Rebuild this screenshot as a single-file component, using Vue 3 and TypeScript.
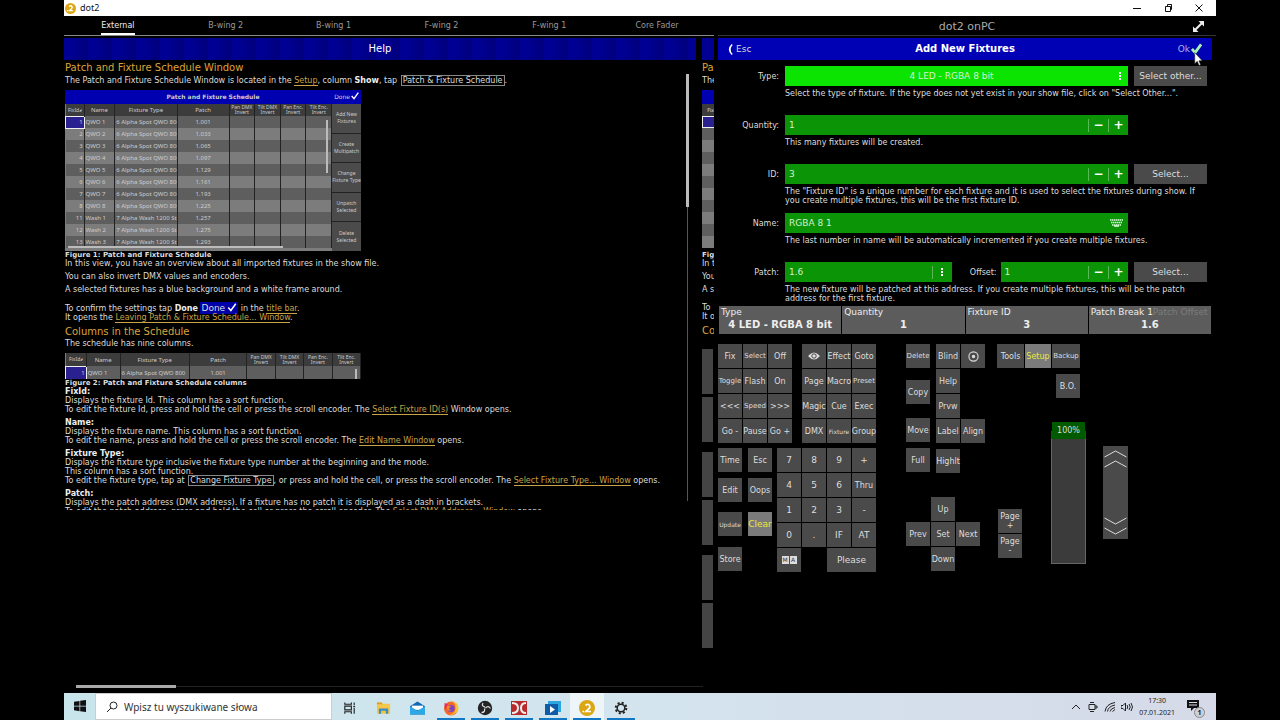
<script setup lang="ts">
import { ref } from 'vue'

interface Key {
  label: string
  size?: string
  lit?: boolean
  icon?: string
  wide?: boolean
}

const tabs = ['External', 'B-wing 2', 'B-wing 1', 'F-wing 2', 'F-wing 1', 'Core Fader']

const patches = ['1.001', '1.033', '1.065', '1.097', '1.129', '1.161', '1.193', '1.225', '1.257', '1.275', '1.293']
const fixtures = patches.map((patch, i) => {
  const wash = i > 7
  return {
    id: wash ? i + 3 : i + 1,
    name: wash ? `Wash ${i - 7}` : `QWO ${i + 1}`,
    type: wash ? '7 Alpha Wash 1200 St' : '6 Alpha Spot QWO 800',
    patch,
  }
})
const figures = [fixtures, fixtures.slice(0, 1)]
const sideActions = ['Add New Fixtures', 'Create Multipatch', 'Change Fixture Type', 'Unpatch Selected', 'Delete Selected']

const fixtureType = ref('4 LED - RGBA 8 bit')
const quantity = ref('1')
const fixtureId = ref('3')
const fixtureName = ref('RGBA 8 1')
const patchAddress = ref('1.6')
const offset = ref('1')

const encoders = [
  { title: 'Type', value: '4 LED - RGBA 8 bit', extra: '' },
  { title: 'Quantity', value: '1', extra: '' },
  { title: 'Fixture ID', value: '3', extra: '' },
  { title: 'Patch Break 1', value: '1.6', extra: 'Patch Offset' },
]

const playback: Key[] = [
  { label: 'Fix' }, { label: 'Select', size: 's' }, { label: 'Off' },
  { label: 'Toggle', size: 's' }, { label: 'Flash' }, { label: 'On' },
  { label: '<<<' }, { label: 'Speed', size: 's' }, { label: '>>>' },
  { label: 'Go -' }, { label: 'Pause' }, { label: 'Go +' },
]
const objects: Key[] = [
  { label: 'View', icon: 'eye' }, { label: 'Effect' }, { label: 'Goto' },
  { label: 'Page' }, { label: 'Macro' }, { label: 'Preset', size: 's' },
  { label: 'Magic' }, { label: 'Cue' }, { label: 'Exec' },
  { label: 'DMX' }, { label: 'Fixture', size: 'xs' }, { label: 'Group' },
]
const editing: Key[] = [
  { label: 'Time' }, { label: 'Esc' }, { label: 'Edit' }, { label: 'Oops' },
  { label: 'Update', size: 'xs' }, { label: 'Clear', size: 'l', lit: true }, { label: 'Store' },
]
const numeric: Key[] = [
  ...['7', '8', '9', '+', '4', '5', '6'].map((label) => ({ label, size: 'l' })),
  { label: 'Thru' },
  ...['1', '2', '3', '-', '0', '.', 'IF', 'AT'].map((label) => ({ label, size: 'l' })),
  { label: 'MA', icon: 'ma' }, { label: 'Please', size: 'l', wide: true },
]
const commands: Key[] = [{ label: 'Delete', size: 's' }, { label: 'Copy' }, { label: 'Move' }, { label: 'Full' }]
const tools: Key[] = [
  { label: 'Blind' }, { label: 'Solo', icon: 'target' }, { label: 'Help' }, { label: 'Prvw' },
  { label: 'Label' }, { label: 'Align' }, { label: 'Highlt' },
]
const setup: Key[] = [{ label: 'Tools' }, { label: 'Setup', lit: true }, { label: 'Backup', size: 's' }]
const cursorKeys = ['Up', 'Prev', 'Set', 'Next', 'Down']
</script>

<template>
  <div class="desktop">
    <header class="titlebar">
      <svg class="logo" viewBox="0 0 24 24"><circle cx="12" cy="12" r="12" fill="#dba714" /><path d="M9 7.500q4-3 6 0t-1 5l-4 4h7M4 16.500h3" fill="none" stroke="#fff" stroke-width="3" /></svg>
      <span>dot2</span>
      <nav class="window-controls">
        <button aria-label="Minimize"><svg viewBox="0 0 10 10"><path d="M1 5.500h8" /></svg></button>
        <button aria-label="Restore"><svg viewBox="0 0 10 10"><path d="M2.500 3.500h5v5h-5zM4.500 3.500v-2h4v5h-1" /></svg></button>
        <button aria-label="Close"><svg viewBox="0 0 10 10"><path d="M1.500 1.500l7 7M8.500 1.500l-7 7" /></svg></button>
      </nav>
    </header>

    <main class="screens">
      <section class="left">
        <nav class="tabs">
          <button v-for="(tab, i) in tabs" :key="tab" :class="{ active: i === 0 }"><span>{{ tab }}</span></button>
        </nav>
        <div class="carousel">
          <div class="page">
            <h1 class="help-title">Help</h1>
            <div class="help-body">
              <article class="help">
                <h2>Patch and Fixture Schedule Window</h2>
                <p class="lead">The Patch and Fixture Schedule Window is located in the <a href="#">Setup</a>, column <b>Show</b>, tap <span class="chip">Patch &amp; Fixture Schedule</span>.</p>
                <template v-for="(rows, f) in figures" :key="f">
                  <template v-if="f === 1">
                    <p>In this view, you have an overview about all imported fixtures in the show file.</p>
                    <p>You can also invert DMX values and encoders.</p>
                    <p>A selected fixtures has a blue background and a white frame around.</p>
                    <p class="confirm">To confirm the settings tap <b>Done</b> <span class="done-chip">Done<svg viewBox="0 0 12 12"><path d="M1 6l3.500 4L11 1" /></svg></span> in the <a href="#">title bar</a>.<br>It opens the <a href="#">Leaving Patch &amp; Fixture Schedule... Window</a>.</p>
                    <h2>Columns in the Schedule</h2>
                    <p class="tight">The schedule has nine columns.</p>
                  </template>
                  <figure :class="f === 0 ? 'full' : 'brief'">
                    <div v-if="f === 0" class="figure-title"><strong>Patch and Fixture Schedule</strong><span>Done<svg viewBox="0 0 12 12"><path d="M1 6l3.500 4L11 1" /></svg></span></div>
                    <div class="figure-body">
                      <table>
                        <colgroup><col class="c-id"><col class="c-name"><col class="c-type"><col class="c-patch"><col><col><col><col></colgroup>
                        <thead><tr><th>FixId<i>◢</i></th><th>Name</th><th>Fixture Type</th><th>Patch</th><th>Pan DMX Invert</th><th>Tilt DMX Invert</th><th>Pan Enc. Invert</th><th>Tilt Enc. Invert</th></tr></thead>
                        <tbody>
                          <tr v-for="(row, r) in rows" :key="row.id">
                            <td :class="{ picked: r === 0 }">{{ row.id }}</td><td>{{ row.name }}</td><td>{{ row.type }}</td><td>{{ row.patch }}</td><td /><td /><td /><td />
                          </tr>
                        </tbody>
                      </table>
                      <div v-if="f === 0" class="side"><button v-for="a in sideActions" :key="a">{{ a }}</button></div>
                      <span class="v-thumb" /><span v-if="f === 0" class="h-thumb" />
                    </div>
                  </figure>
                  <p class="caption">{{ f === 0 ? 'Figure 1: Patch and Fixture Schedule' : 'Figure 2: Patch and Fixture Schedule columns' }}</p>
                </template>
                <p><b>FixId:</b><br>Displays the fixture Id. This column has a sort function.<br>To edit the fixture Id, press and hold the cell or press the scroll encoder. The <a href="#">Select Fixture ID(s)</a> Window opens.</p>
                <p><b>Name:</b><br>Displays the fixture name. This column has a sort function.<br>To edit the name, press and hold the cell or press the scroll encoder. The <a href="#">Edit Name Window</a> opens.</p>
                <p><b>Fixture Type:</b><br>Displays the fixture type inclusive the fixture type number at the beginning and the mode.<br>This column has a sort function.<br>To edit the fixture type, tap at <span class="chip">Change Fixture Type</span>, or press and hold the cell, or press the scroll encoder. The <a href="#">Select Fixture Type... Window</a> opens.</p>
                <p><b>Patch:</b><br>Displays the patch address (DMX address). If a fixture has no patch it is displayed as a dash in brackets.<br>To edit the patch address, press and hold the cell or press the scroll encoder. The <a href="#">Select DMX Address... Window</a> opens.</p>
              </article>
              <div class="scroll-track"><span /></div>
            </div>
          </div>
          <div class="page next" aria-hidden="true">
            <div class="help-title" />
            <div class="help">
              <h2>Pa</h2>
              <p class="lead">The</p>
              <div class="edge">
                <div class="edge-title" /><div class="edge-head">Fix</div>
                <span v-for="f in fixtures" :key="f.id" />
              </div>
              <p class="caption">Fig</p>
              <p>In t</p>
              <p>You</p>
              <p>A s</p>
              <p class="confirm">To<br>It o</p>
              <h2>Co</h2>
            </div>
            <div class="strips"><span v-for="n in 6" :key="n" /></div>
          </div>
        </div>
        <div class="pager"><span /></div>
      </section>

      <section class="right">
        <header class="app-name">
          <span>dot2 onPC</span>
          <button aria-label="Full screen"><svg viewBox="0 0 12 12"><path d="M6 0h6v6L9.800 3.800 3.800 9.800 6 12H0V6l2.200 2.200 6-6z" /></svg></button>
        </header>
        <div class="dialog-title">
          <button class="esc"><svg viewBox="0 0 6 12"><path d="M5 0Q-1 6 5 12" /></svg>Esc</button>
          <h1>Add New Fixtures</h1>
          <button class="ok">Ok<svg class="tick" viewBox="0 0 12 12"><path d="M1 6l3.500 4L11 1" /></svg><svg class="pointer" viewBox="0 0 8 13"><path d="M.5.500v10.500l2.300-2.300 1.700 3.800 1.500-.7-1.600-3.600H7.500z" /></svg></button>
        </div>

        <form class="form" @submit.prevent>
          <div class="row">
            <label for="type">Type:</label>
            <div class="field bright">
              <select id="type" v-model="fixtureType"><option>4 LED - RGBA 8 bit</option></select>
              <svg class="dots" viewBox="0 0 4 10"><path d="M1 1h2v2H1zM1 4h2v2H1zM1 7h2v2H1z" /></svg>
            </div>
            <button class="pick">Select other...</button>
            <p>Select the type of fixture. If the type does not yet exist in your show file, click on "Select Other...".</p>
          </div>
          <div class="row">
            <label for="quantity">Quantity:</label>
            <div class="field"><input id="quantity" v-model="quantity" type="text"><button aria-label="Decrease quantity">−</button><button aria-label="Increase quantity">+</button></div>
            <p>This many fixtures will be created.</p>
          </div>
          <div class="row">
            <label for="fid">ID:</label>
            <div class="field"><input id="fid" v-model="fixtureId" type="text"><button aria-label="Decrease ID">−</button><button aria-label="Increase ID">+</button></div>
            <button class="pick">Select...</button>
            <p>The "Fixture ID" is a unique number for each fixture and it is used to select the fixtures during show. If<br>you create multiple fixtures, this will be the first fixture ID.</p>
          </div>
          <div class="row">
            <label for="fname">Name:</label>
            <div class="field">
              <input id="fname" v-model="fixtureName" type="text">
              <svg class="keyboard" viewBox="0 0 13 8"><path d="M0 1h13M1 3.500h11M2 6h9" stroke-dasharray="1.500 .5" /><path d="M4 7h5" /></svg>
            </div>
            <p>The last number in name will be automatically incremented if you create multiple fixtures.</p>
          </div>
          <div class="row">
            <label for="patch">Patch:</label>
            <div class="split">
              <div class="field patch"><input id="patch" v-model="patchAddress" type="text"><button aria-label="Patch options"><svg class="dots" viewBox="0 0 4 10"><path d="M1 1h2v2H1zM1 4h2v2H1zM1 7h2v2H1z" /></svg></button></div>
              <label for="offset">Offset:</label>
              <div class="field offset"><input id="offset" v-model="offset" type="text"><button aria-label="Decrease offset">−</button><button aria-label="Increase offset">+</button></div>
            </div>
            <button class="pick">Select...</button>
            <p>The new fixture will be patched at this address. If you create multiple fixtures, this will be the patch<br>address for the first fixture.</p>
          </div>
        </form>

        <div class="encoders">
          <button v-for="e in encoders" :key="e.title"><span class="cap">{{ e.title }}<i v-if="e.extra">{{ e.extra }}</i></span><strong>{{ e.value }}</strong></button>
        </div>

        <div class="console">
          <div class="block-main">
            <div class="banks">
              <div v-for="(bank, b) in [playback, objects]" :key="b" class="keys three">
                <button v-for="k in bank" :key="k.label" class="key" :class="k.size" :aria-label="k.label">
                  <svg v-if="k.icon" class="eye" viewBox="0 0 12 8"><path d="M0 4q6-7 12 0-6 7-12 0z" fill="#ddd" /><circle cx="6" cy="4" r="2.200" fill="#ddd" stroke="#444" /></svg>
                  <template v-else>{{ k.label }}</template>
                </button>
              </div>
            </div>
            <div class="entry">
              <div class="editing">
                <button v-for="k in editing" :key="k.label" class="key" :class="[k.size, { lit: k.lit }]">{{ k.label }}</button>
              </div>
              <div class="keys four">
                <button v-for="k in numeric" :key="k.label" class="key" :class="[k.size, { wide: k.wide }]">
                  <span v-if="k.icon" class="ma"><i>M</i><i>A</i></span>
                  <template v-else>{{ k.label }}</template>
                </button>
              </div>
            </div>
          </div>

          <div class="block-command">
            <div class="command-top">
              <div class="commands"><button v-for="k in commands" :key="k.label" class="key" :class="k.size">{{ k.label }}</button></div>
              <div class="keys tools">
                <button v-for="k in tools" :key="k.label" class="key" :class="[k.size, 't-' + k.label]" :aria-label="k.label">
                  <svg v-if="k.icon" class="target" viewBox="0 0 10 10"><circle cx="5" cy="5" r="4.200" fill="none" stroke="#ddd" /><circle cx="5" cy="5" r="1.500" fill="#ddd" /></svg>
                  <template v-else>{{ k.label }}</template>
                </button>
              </div>
            </div>
            <div class="keys cross"><button v-for="c in cursorKeys" :key="c" class="key" :class="c">{{ c }}</button></div>
          </div>

          <div class="block-setup">
            <div class="keys setup"><button v-for="k in setup" :key="k.label" class="key" :class="[k.size, { lit: k.lit }]">{{ k.label }}</button></div>
            <button class="key blackout">B.O.</button>
            <div class="fader-row">
              <div class="keys paging"><button class="key">Page<br>+</button><button class="key">Page<br>-</button></div>
              <div class="fader"><span>100%</span></div>
            </div>
          </div>

          <div class="wheel">
            <svg viewBox="0 0 24 22"><path d="M1 10l11-6 11 6M1 20l11-6 11 6" /></svg>
            <svg viewBox="0 0 24 22"><path d="M1 2l11 6 11-6M1 12l11 6 11-6" /></svg>
          </div>
        </div>
      </section>
    </main>

    <footer class="taskbar">
      <button class="start" aria-label="Start"><svg viewBox="0 0 12 12"><path d="M0 1.700l5.500-.8v4.800H0zM6.200.8L12 0v5.700H6.200zM0 6.400h5.500v4.800L0 10.300zM6.200 6.400H12V12l-5.800-.8z" fill="#111" /></svg></button>
      <label class="search"><svg viewBox="0 0 12 12"><circle cx="7.500" cy="4.500" r="3.500" fill="none" stroke="#222" /><path d="M5 7L1 11" stroke="#222" /></svg><input type="text" aria-label="Search" placeholder="Wpisz tu wyszukiwane słowa"></label>
      <button class="task" aria-label="Task view"><svg viewBox="0 0 16 16"><path d="M3 2v2h7V2M3 14v-2h7v2M3 6h7v4H3zM13 2v3M13 8v6M12 6.500h2" fill="none" stroke="#222" stroke-width="1.200" /></svg></button>
      <button class="task" aria-label="File Explorer"><svg viewBox="0 0 16 16"><path d="M1 2h5l1.500 1.500H15V14H1z" fill="#f6c648" /><path d="M1 2h5l1 2H1z" fill="#dca02a" /><path d="M3 14V8.500h10V14h-2.500v-3h-5v3z" fill="#3d8dc6" /></svg></button>
      <button class="task" aria-label="Mail"><svg viewBox="0 0 16 16"><path d="M0 6l8-5 8 5v9H0z" fill="#1268b3" /><path d="M2 5.500h12V10H2z" fill="#fff" /><path d="M0 6l8 5 8-5v9H0z" fill="#2ba8e5" /></svg></button>
      <button class="task running" aria-label="Firefox"><svg viewBox="0 0 16 16"><circle cx="8" cy="8.500" r="7" fill="#f5662c" /><path d="M9 1q7 2 6.500 8-3 6-9 6 7-3 6-8Q12 3 9 1z" fill="#ffc329" /><path d="M1.500 3q2 1 3.500 1l-3 6z" fill="#e8285e" /><circle cx="8" cy="8.500" r="3.600" fill="#7544c7" /><path d="M4 6q3-1 4 1l-2 1q0 2 3 2-4 2-5-1z" fill="#f78429" /></svg></button>
      <button class="task running" aria-label="OBS"><svg viewBox="0 0 16 16"><circle cx="8" cy="8" r="7.200" fill="#242426" /><path d="M8 7Q4 6 6 3M8.500 8q3-3 5 .5M7.500 8.500q1 4-3 4" fill="none" stroke="#ddd" stroke-width="1.300" /></svg></button>
      <button class="task running" aria-label="Control"><svg viewBox="0 0 16 16"><path d="M0 1h16v14H0z" fill="#b92a2c" /><path d="M1 3q6 0 6 5t-6 5M15 3q-5 0-5 5t5 5" fill="none" stroke="#eee" stroke-width="2" /></svg></button>
      <button class="task running" aria-label="Player"><svg viewBox="0 0 16 16"><path d="M3 1h13v11H3z" fill="#2ba6df" /><path d="M0 4h13v11H0z" fill="#0f5ba7" /><path d="M5 6l5 3.500L5 13z" fill="#fff" /></svg></button>
      <button class="task running current" aria-label="dot2"><svg viewBox="0 0 16 16"><circle cx="8" cy="8" r="8" fill="#dba714" /><path d="M6.500 5.500q3-2.500 4 0t-1 3.500L7 11.500h5M3.500 11.500h1.500" fill="none" stroke="#fff" stroke-width="1.700" /></svg></button>
      <button class="task running" aria-label="Settings"><svg viewBox="0 0 16 16"><circle cx="8" cy="8" r="5.300" fill="none" stroke="#222" stroke-width="2" stroke-dasharray="2.080 2.080" /><circle cx="8" cy="8" r="3.800" fill="none" stroke="#222" stroke-width="1.500" /></svg></button>
      <div class="tray">
        <svg viewBox="0 0 12 12"><path d="M2 8l4-4 4 4" /></svg>
        <svg viewBox="0 0 12 12"><path d="M2 3.500h6v5H2zM8 5h2v2H8M3 1.500h4M3 10.500h4" /></svg>
        <svg viewBox="0 0 12 12"><path d="M1 10.500Q2 3 11 1.500M3.500 10.500Q4 5.500 11 4M6 10.500Q6.500 7.500 11 6.500M8.500 10.500l2.500-2" /></svg>
        <svg viewBox="0 0 12 12"><path d="M0 4.500h2L4.500 2v8L2 7.500H0zM6 4q1.500 2 0 4M8 3q2.500 3 0 6M10 2q3 4 0 8" /></svg>
        <time>17:30<br>07.01.2021</time>
        <button class="notes" aria-label="Notifications, 1 new"><svg viewBox="0 0 12 12"><path d="M0 1h12v8H7L4 12V9H0z" fill="#111" stroke="none" /><path d="M2 3.500h8M2 6h8" stroke="#d6dbe6" /></svg><b>1</b></button>
      </div>
    </footer>
  </div>
</template>

<style>
body { background: #000; }
</style>

<style scoped>
* { box-sizing: border-box; }
.desktop { display: flex; flex-direction: column; min-height: 100vh; margin: 0 5%; background: #000; color: #ddd; font: 8px/9px "DejaVu Sans", sans-serif; }
button, input, select { margin: 0; padding: 0; border: 0; border-radius: 0; background: none; color: inherit; font: inherit; }
h1, h2, p, figure { margin: 0; }
.titlebar { display: flex; align-items: center; gap: 4px; height: 16px; padding: 0 7px 0 1px; background: #fff; color: #111; font: 9px/16px "Noto Sans", sans-serif; }
.logo { width: 11px; height: 11px; }
.window-controls { display: flex; gap: 11px; margin-left: auto; }
.window-controls button { display: flex; align-items: center; justify-content: center; width: 20px; height: 14px; }
.window-controls svg { width: 10px; height: 10px; fill: none; stroke: #111; }
.screens { display: grid; grid-template-columns: 650fr 502fr; flex: 1; }

.left { display: flex; flex-direction: column; min-width: 0; }
.tabs { display: flex; height: 20px; padding-right: 3px; border-bottom: 1px solid #888; color: #999; }
.tabs button { display: flex; flex: 1; justify-content: center; height: 19px; }
.tabs span { display: block; height: 19px; line-height: 20px; }
.tabs .active span { border-bottom: 2px solid #fff; color: #eee; }
.carousel { display: flex; flex: 1; gap: 6px; margin-top: 2px; overflow: hidden; }
.page { flex: 1; min-width: 0; }
.page.next { flex: none; width: 12px; overflow: hidden; }
.help-title { height: 22px; background: radial-gradient(circle at 0 50%, #000092 0 11px, #00008a 13px 17px, #000080 19px) 0 0 / 24px 22px; color: #fff; font-size: 10px; font-weight: normal; line-height: 22px; text-align: center; }
.help-body { display: flex; height: 450px; overflow: hidden; }
.help { flex: 1; min-width: 0; padding: 2px 0 0 1px; overflow: hidden; white-space: nowrap; }
.next .help { flex: none; height: 277px; padding-left: 0; }
.help h2 { color: #dda43c; font-size: 10px; font-weight: normal; line-height: 12px; }
.help p { margin-bottom: 4px; }
.help .lead { margin: 2px 0 5px; }
.help .tight { margin: 1px 0 5px; }
.help .caption { margin: 0; font-size: 7px; font-weight: bold; line-height: 8px; }
.help .confirm { margin: 9px 0 4px; }
.help a { border-bottom: 1px solid #c9a347; color: #c9a347; text-decoration: none; }
.help b { color: #eee; }
.chip { margin-left: 1px; border: 1px solid #888; padding: 0 1px; }
.done-chip { padding: 1px; background: #0000a8; font-size: 9px; line-height: 8px; }
.done-chip svg, .figure-title svg { width: 10px; height: 9px; margin-left: 2px; vertical-align: -1px; fill: none; stroke: #fff; stroke-width: 2; }
figure { width: 296px; overflow: hidden; color: #ccc; font: 6px/6px "Noto Sans", sans-serif; }
.full { height: 161px; }
.brief { height: 26px; }
.figure-title { display: flex; justify-content: center; height: 14px; background: #0000b0; position: relative; line-height: 14px; font-size: 7px; font-family: "DejaVu Sans", sans-serif; }
.figure-title strong { font-size: 6px; }
.figure-title span { position: absolute; right: 2px; font-size: 6px; }
.figure-title svg { width: 8px; height: 8px; margin-left: 1px; }
.figure-body { position: relative; display: flex; align-items: flex-start; background: #7c7c7c; }
.full .figure-body { height: 147px; }
table { flex: 1; width: 100%; table-layout: fixed; border-collapse: collapse; }
.c-id { width: 7%; }
.c-name { width: 11.500%; }
.c-type { width: 23.500%; }
.c-patch { width: 19.500%; }
th, td { height: 12px; padding: 0 1px; overflow: hidden; border-right: 1px solid #222; }
th { padding: 0; background: #3c3c3c; font-weight: normal; white-space: normal; line-height: 6px; }
th:nth-child(n + 5) { font-size: 5px; line-height: 5px; }
th:first-child { font-size: 5px; }
th i { font-size: 3px; vertical-align: top; }
td { background: #5e5e5e; }
tr:nth-child(even) td { background: #7c7c7c; }
.brief th, .brief td { height: 13px; }
td:first-child { text-align: right; }
td:nth-child(4) { text-align: center; }
td.picked { border: 1px solid #eee; background: #2b2090; }
.side { display: flex; flex-direction: column; align-self: stretch; gap: 1px; width: 29px; background: #222; }
.side button { flex: 1; background: #4b4b4b; font-size: 5px; line-height: 7px; white-space: normal; }
.v-thumb { position: absolute; top: 16px; right: 33px; width: 2px; height: 53px; background: #bbb; }
.brief .v-thumb { right: 4px; height: 12px; }
.h-thumb { position: absolute; bottom: 3px; left: 3px; width: 215px; height: 2px; background: #bbb; }
.edge { height: 161px; overflow: hidden; }
.edge-title { height: 14px; background: #0000b0; }
.edge-head { height: 12px; background: #3c3c3c; font-size: 5px; line-height: 12px; text-align: right; }
.edge span { display: block; height: 12px; background: #7c7c7c; }
.edge span:nth-child(even) { background: #5e5e5e; }
.edge span:nth-child(3) { border: 1px solid #eee; border-right: 0; background: #2b2090; }
.scroll-track { width: 1px; height: 427px; margin: 14px 8px 0 0; background: #555; }
.scroll-track span { display: block; width: 3px; height: 133px; margin-left: -1px; background: #bbb; }
.strips { display: flex; flex-direction: column; gap: 3px; padding-top: 12px; }
.strips span { width: 11px; height: 45px; background: #444; }
.strips span:nth-child(odd):not(:first-child) { margin-top: 7px; }
.pager { height: 1px; margin: 0 11px 6px 12px; background: #222; }
.pager span { display: block; width: 16%; height: 3px; margin-top: -1px; background: #aaa; }

.right { min-width: 0; padding-left: 4px; }
.app-name { position: relative; display: flex; justify-content: center; height: 20px; margin-bottom: 2px; border-bottom: 1px solid #333; color: #aaa; font-size: 11px; line-height: 21px; }
.app-name button { position: absolute; top: 4px; right: 11px; width: 12px; height: 12px; }
.app-name svg { display: block; width: 11px; height: 11px; fill: #eee; }
.dialog-title { display: grid; grid-template-columns: 60px 1fr 60px; align-items: center; height: 22px; margin-right: 4px; padding: 0 10px; background: #0000b4; }
.dialog-title h1 { color: #fff; font-size: 10px; text-align: center; line-height: 22px; }
.dialog-title button { display: flex; align-items: center; gap: 3px; font-size: 9px; }
.esc svg { width: 5px; height: 13px; fill: none; stroke: #fff; stroke-width: 2; }
.dialog-title .ok { position: relative; justify-self: end; gap: 1px; color: #a9b4e8; }
.ok .tick { width: 11px; height: 12px; fill: none; stroke: #a5f5b4; stroke-width: 3; }
.pointer { position: absolute; top: 9px; right: -1px; width: 9px; height: 14px; fill: #fff; stroke: #111; stroke-width: .5; }
.form { padding: 6px 9px 0 0; }
.row { display: grid; grid-template-columns: 61px 1fr 73px; column-gap: 6px; grid-template-rows: 20px auto; align-items: center; min-height: 49px; align-content: start; }
.row:last-child { min-height: 44px; }
.row > label { text-align: right; }
.row p { grid-column: 2 / 4; margin-top: 3px; margin-right: -9px; white-space: nowrap; }
.field { display: flex; align-items: center; height: 20px; min-width: 0; background: #0b9406; font-size: 9px; }
.bright { position: relative; background: #0be300; }
.field input, .field select { flex: 1; min-width: 0; width: 10px; height: 20px; padding: 0 4px; outline: 0; color: #d4f0d0; }
.field select { appearance: none; padding-right: 14px; text-align: center; text-align-last: center; }
.field button { display: flex; justify-content: center; align-items: center; width: 20px; height: 13px; border-left: 1px solid #58b955; color: #fff; font-size: 12px; font-weight: bold; line-height: 13px; }
.dots { width: 4px; height: 10px; fill: #fff; }
.bright .dots { position: absolute; right: 6px; }
.keyboard { width: 13px; height: 8px; margin-right: 5px; fill: none; stroke: #dfd; stroke-width: 1.500; }
.pick { height: 20px; background: #4a4a4a; font-size: 9px; white-space: nowrap; }
.split { display: flex; align-items: center; gap: 4px; }
.split .patch { flex: 166; }
.split .offset { flex: 127; }
.split label { width: 41px; text-align: right; }
.encoders { display: grid; grid-template-columns: repeat(4, 1fr); gap: 1px; margin: 0 5px 0 1px; }
.encoders button { display: flex; flex-direction: column; align-items: stretch; height: 28px; background: #5c5c5c; color: #eee; }
.cap { display: flex; padding: 0 2px; font-size: 9px; line-height: 12px; white-space: nowrap; }
.cap i { color: #7b7b7b; font-style: normal; }
.encoders strong { font-size: 10px; line-height: 13px; text-align: center; }

.console { display: flex; align-items: flex-start; padding-top: 10px; }
.keys { display: grid; grid-auto-rows: 24px; grid-auto-columns: 24px; gap: 1px; }
.key { display: flex; align-items: center; justify-content: center; width: 24px; height: 24px; background: #4a4a4a; white-space: nowrap; text-align: center; }
.key.s { font-size: 7px; }
.key.xs { font-size: 6px; }
.key.l { font-size: 9px; }
.key.lit { background: #7b7b7b; color: #e9e93a; }
.key.wide { grid-column: 3 / 5; width: 49px; }
.three { grid-template-columns: repeat(3, 24px); }
.four { grid-template-columns: repeat(4, 24px); }
.banks { display: flex; gap: 10px; justify-content: space-between; margin-bottom: 5px; }
.block-main { width: 158px; }
.entry { display: flex; justify-content: space-between; }
.editing { display: grid; grid-template-columns: 24px 24px; grid-template-rows: 30px 34px 35px 24px; column-gap: 6px; }
.eye { width: 12px; height: 8px; }
.target { width: 11px; height: 11px; }
.four .key:nth-last-child(2) { grid-column: 1; }
.ma { display: flex; gap: 1px; }
.ma i { width: 7px; background: #ddd; color: #333; font-size: 6px; font-style: normal; line-height: 8px; }
.block-command { display: flex; flex-direction: column; gap: 24px; margin-left: 30px; }
.command-top { display: flex; gap: 6px; }
.commands { display: grid; grid-template-rows: 36px 38px 30px 24px; }
.tools { grid-template-rows: 24px 24px 24px 29px 24px; }
.t-Help, .t-Prvw, .t-Label, .t-Highlt { grid-column: 1; }
.t-Align { grid-column: 2; }
.cross { grid-template-columns: repeat(3, 24px); }
.Up, .Down { grid-column: 2; }
.Prev { grid-column: 1; }
.block-setup { width: 90px; margin-left: 12px; }
.setup { grid-template-columns: 27px 26px 28px; }
.setup .key { width: 100%; }
.blackout { margin: 6px 0 0 59px; }
.fader-row { display: flex; gap: 29px; margin: 24px 0 0 1px; align-items: flex-end; }
.paging { margin-bottom: 6px; }
.fader { display: flex; flex-direction: column; width: 35px; height: 142px; padding-top: 9px; background: linear-gradient(#000 9px, #3b3b3b 9px) no-repeat; }
.fader::after { content: ""; flex: 1; border: 1px solid #666; border-top: 0; }
.fader span { margin: -9px 1px 0; height: 17px; background: #005a00; line-height: 17px; text-align: center; z-index: 1; }
.wheel { display: flex; flex-direction: column; justify-content: space-between; width: 25px; height: 93px; margin: 102px 0 0 16px; padding: 1px 0; background: #4a4a4a; }
.wheel svg { width: 25px; height: 22px; fill: none; stroke: #ddd; }

.taskbar { display: flex; align-items: stretch; height: 27px; background: linear-gradient(90deg, #c9e5ec, #d3e5ee 45%, #d6dae8); color: #222; font: 10px/14px "Noto Sans", sans-serif; }
.start { width: 31px; padding-top: 2px; }
.start svg { width: 12px; height: 12px; }
.search { display: flex; align-items: center; gap: 6px; width: 237px; padding-left: 10px; border: 1px solid #ccc; background: #fff; }
.search svg { width: 12px; height: 12px; }
.search input { flex: 1; min-width: 0; height: 18px; outline: 0; }
.search input::placeholder { color: #333; opacity: 1; }
.task { display: flex; align-items: center; justify-content: center; width: 34px; border: solid transparent; border-width: 2px 3px 0; }
.task svg { width: 16px; height: 16px; }
.task:not(.running) svg { width: 15px; }
.running { background: linear-gradient(#1277c4, #1277c4) bottom / 100% 2px no-repeat; }
.current { background-color: #eef5f8; }
.tray { display: flex; align-items: center; gap: 5px; margin-left: auto; padding-right: 3px; }
.tray svg { width: 12px; height: 12px; fill: none; stroke: #222; }
.tray time { margin-left: 1px; font-size: 7px; line-height: 12px; text-align: center; }
.notes { position: relative; width: 24px; height: 22px; margin: 0 8px 0 1px; }
.notes b { position: absolute; right: 0; bottom: 0; width: 11px; height: 11px; border: 1px solid #888; border-radius: 50%; background: #ccd0da; font-size: 7px; line-height: 9px; }
</style>
